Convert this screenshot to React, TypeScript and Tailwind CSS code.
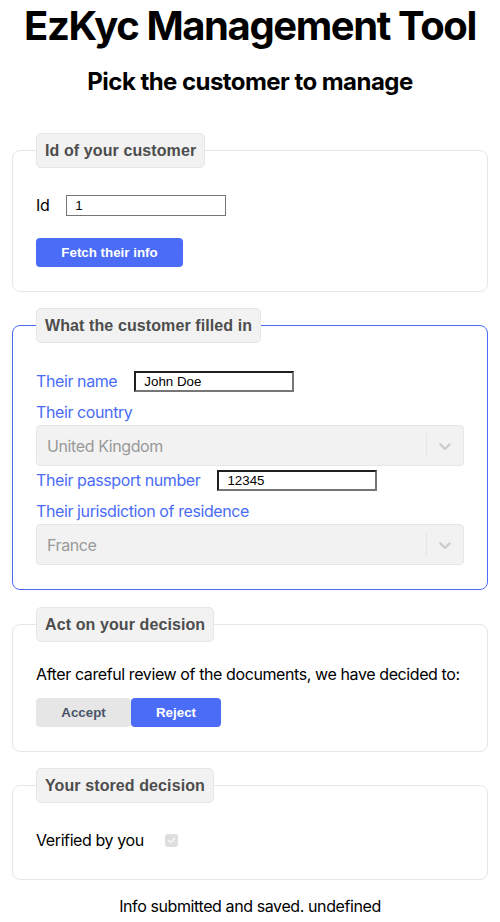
import React from 'react';

const sans = 'font-["Inter","Liberation_Sans",sans-serif]';
const arial = 'font-["Liberation_Sans","Arial",sans-serif]';

function Legend({ children }: { children: React.ReactNode }) {
  return (
    <legend className={`${arial} ml-0 px-2 py-[5px] text-base leading-[23px] font-bold tracking-[0.1px] text-[#4d4d4d] bg-[#f2f2f2] border border-[#e6e6e6] rounded-[5px]`}>
      {children}
    </legend>
  );
}

function Chevron() {
  return (
    <svg width="20" height="20" viewBox="0 0 20 20" className="fill-[#cccccc]">
      <path d="M4.516 7.548c0.436-0.446 1.043-0.481 1.576 0l3.908 3.747 3.908-3.747c0.533-0.481 1.141-0.446 1.574 0 0.436 0.445 0.408 1.197 0 1.615-0.406 0.418-4.695 4.502-4.695 4.502-0.217 0.223-0.502 0.335-0.787 0.335s-0.57-0.112-0.789-0.335c0 0-4.287-4.084-4.695-4.502s-0.436-1.17 0-1.615z" />
    </svg>
  );
}

function DisabledSelect({ value }: { value: string }) {
  return (
    <div className="mt-[1px] h-[41px] flex items-center bg-[#f2f2f2] border border-[#e6e6e6] rounded-[4px]">
      <div className="flex-1 pl-[10px] text-base text-[#999999]">{value}</div>
      <span className="w-px self-stretch my-2 bg-[#e6e6e6]" />
      <div className="p-2 flex items-center"><Chevron /></div>
    </div>
  );
}

const insetInput = `${arial} w-[160px] h-[21px] pl-2 text-[13.33px] tracking-normal text-black border-2 border-t-[#1f1f1f] border-l-[#1f1f1f] border-b-[#767676] border-r-[#767676] outline-none`;

export default function App() {
  return (
    <div className={`${sans} w-[500px] text-black bg-white tracking-[-0.4px] pb-4`}>
      <h1 className="mt-[2px] text-center text-[40px] leading-[48px] font-bold tracking-[-1.4px]">EzKyc Management Tool</h1>
      <h2 className="mt-4 text-center text-2xl leading-8 font-bold tracking-[-0.55px]">Pick the customer to manage</h2>

      <div className="mt-[35px] mx-3 flex flex-col gap-4">
        <fieldset className="px-[23px] pb-[24px] border border-[#e6e6e6] rounded-lg">
          <Legend>Id of your customer</Legend>
          <div className="pt-[25px] flex items-center h-[49px]">
            <span className="text-base leading-6 mr-[17px]">Id</span>
            <input readOnly value="1" className={`${arial} w-[160px] h-[21px] pl-2 text-[13.33px] tracking-normal border border-[#767676] outline-none`} />
          </div>
          <button className={`${arial} mt-[21px] h-[29px] w-[147px] rounded-[4px] bg-[#4a6cf7] text-white text-[13.33px] font-bold tracking-normal`}>
            Fetch their info
          </button>
        </fieldset>

        <fieldset className="px-[23px] pb-[24px] border border-[#4a6cf7] rounded-lg">
          <Legend>What the customer filled in</Legend>
          <div className="mt-[26px] flex items-center h-6">
            <span className="text-base leading-6 text-[#4a6cf7] mr-[17px]">Their name</span>
            <input readOnly value="John Doe" className={insetInput} />
          </div>
          <div className="mt-[7px] text-base leading-6 text-[#4a6cf7]">Their country</div>
          <DisabledSelect value="United Kingdom" />
          <div className="mt-[2px] flex items-center h-6">
            <span className="text-base leading-6 text-[#4a6cf7] mr-[17px]">Their passport number</span>
            <input readOnly value="12345" className={insetInput} />
          </div>
          <div className="mt-[7px] text-base leading-6 text-[#4a6cf7]">Their jurisdiction of residence</div>
          <DisabledSelect value="France" />
        </fieldset>

        <fieldset className="mt-[1px] px-[23px] pb-[24px] border border-[#e6e6e6] rounded-lg">
          <Legend>Act on your decision</Legend>
          <p className="pt-[20px] text-base leading-6 whitespace-nowrap">After careful review of the documents, we have decided to:</p>
          <div className="mt-[12px] flex">
            <button className={`${arial} h-[29px] w-[95px] rounded-[4px] bg-[#e6e6e6] text-[#4a5568] text-[13.33px] font-bold tracking-normal`}>Accept</button>
            <button className={`${arial} h-[29px] w-[90px] rounded-[4px] bg-[#4a6cf7] text-white text-[13.33px] font-bold tracking-normal`}>Reject</button>
          </div>
        </fieldset>

        <fieldset className="px-[23px] pb-[27px] border border-[#e6e6e6] rounded-lg">
          <Legend>Your stored decision</Legend>
          <div className="pt-[25px] flex items-center">
            <span className="text-base leading-6">Verified by you</span>
            <span className="ml-[21px] w-[13px] h-[13px] rounded-[3px] bg-[#dedede] flex items-center justify-center">
              <svg width="9" height="9" viewBox="0 0 10 10" fill="none" stroke="#f4f4f4" strokeWidth="1.8" strokeLinecap="round" strokeLinejoin="round">
                <path d="M1.8 5.2 4 7.4 8.4 2.6" />
              </svg>
            </span>
          </div>
        </fieldset>
      </div>

      <p className="mt-[14px] text-center text-base leading-6">Info submitted and saved. undefined</p>
    </div>
  );
}
